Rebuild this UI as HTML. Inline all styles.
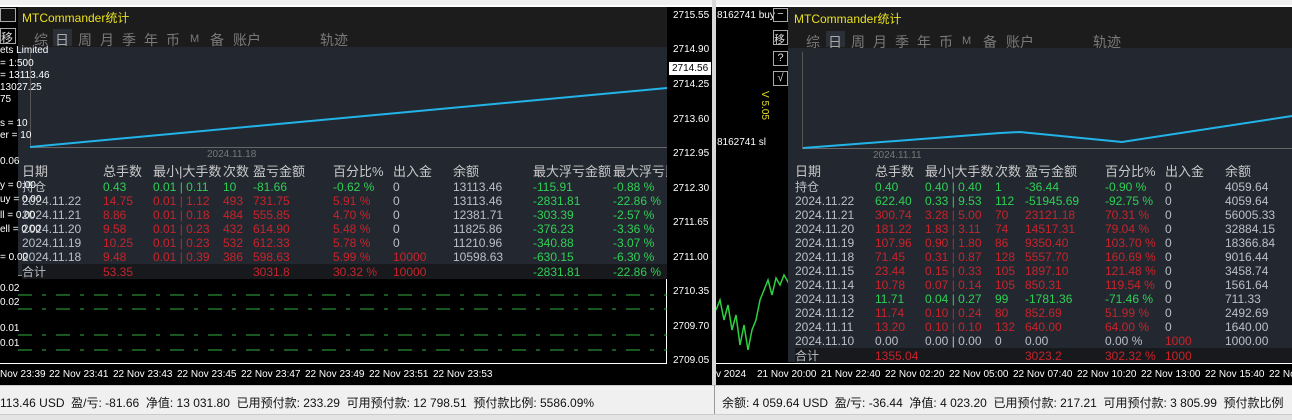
<!DOCTYPE html>
<html><head><meta charset="utf-8">
<style>
*{margin:0;padding:0;box-sizing:border-box}
body{width:1292px;height:420px;overflow:hidden;background:#000;position:relative;font-family:"Liberation Sans","Noto Sans CJK SC",sans-serif;color:#ddd}
.a{position:absolute;white-space:nowrap}
.px{font-size:10px;color:#fff}
.tab{font-size:14px;color:#7a7a7a;top:30px}
table{position:absolute;border-collapse:collapse;table-layout:fixed;font-size:12px}
td{height:14px;line-height:14px;padding:0;white-space:nowrap;overflow:hidden}
tr.h td{font-size:13px;color:#c8c8c8;height:16px}
.g td{color:#2fcf55}.r td{color:#c8232a}.w td{color:#b9c0c8}
td.d{color:#b9c0c8}td.z{color:#b9c0c8}
tr.t td{background:#17191c}
.tx{font-size:10px;color:#fff;top:369px}
.sb{font-size:12px;color:#111;top:394px}
</style></head><body>
<div class="a" style="left:0;top:0;width:1292px;height:6px;background:#f0f0f0"></div>
<div class="a" style="left:0;top:5px;width:1292px;height:2px;background:#fff"></div>
<div class="a" style="left:712px;top:0;width:4px;height:420px;background:#d8d8d8"></div>
<div class="a" style="left:0;top:7px;width:667px;height:357px;border-right:1px solid #fff;border-bottom:1px solid #fff"></div>
<div class="a px" style="left:673px;top:10px">2715.55</div>
<div class="a px" style="left:673px;top:44px">2714.90</div>
<div class="a" style="left:669px;top:62px;width:42px;height:13px;background:#fff;color:#000;font-size:10px;padding-left:3px;line-height:13px">2714.56</div>
<div class="a px" style="left:673px;top:79px">2714.25</div>
<div class="a px" style="left:673px;top:114px">2713.60</div>
<div class="a px" style="left:673px;top:148px">2712.95</div>
<div class="a px" style="left:673px;top:183px">2712.30</div>
<div class="a px" style="left:673px;top:217px">2711.65</div>
<div class="a px" style="left:673px;top:252px">2711.00</div>
<div class="a px" style="left:673px;top:286px">2710.35</div>
<div class="a px" style="left:673px;top:321px">2709.70</div>
<div class="a px" style="left:673px;top:355px">2709.05</div>
<svg class="a" style="left:0;top:290px" width="667" height="70"><g stroke="#2fb040" stroke-width="1" stroke-dasharray="14,10,4,10"><line x1="18" y1="5" x2="667" y2="5"/><line x1="18" y1="19" x2="667" y2="19"/><line x1="18" y1="45" x2="667" y2="45"/><line x1="18" y1="60" x2="667" y2="60"/></g></svg>
<div class="a px" style="left:0;top:283px">0.02</div>
<div class="a px" style="left:0;top:297px">0.02</div>
<div class="a px" style="left:0;top:323px">0.01</div>
<div class="a px" style="left:0;top:338px">0.01</div>
<div class="a" style="left:18px;top:7px;width:649px;height:20px;background:#1c1c1c"></div>
<div class="a" style="left:22px;top:9px;font-size:12px;color:#e8e020">MTCommander统计</div>
<div class="a" style="left:18px;top:27px;width:649px;height:20px;background:#1c1c1c"></div>
<div class="a" style="left:53px;top:29px;width:19px;height:17px;background:#2a2f38"></div>
<div class="a tab" style="left:34px">综</div><div class="a tab" style="left:55px;color:#aaa">日</div><div class="a tab" style="left:78px">周</div><div class="a tab" style="left:100px">月</div><div class="a tab" style="left:122px">季</div><div class="a tab" style="left:144px">年</div><div class="a tab" style="left:166px">币</div><div class="a tab" style="left:190px;font-size:11px;top:33px">M</div><div class="a tab" style="left:210px">备</div><div class="a tab" style="left:233px">账户</div><div class="a tab" style="left:320px">轨迹</div>
<div class="a" style="left:18px;top:47px;width:649px;height:229px;background:#232830;border-bottom:1px solid #888"></div>
<div class="a" style="left:30px;top:147px;width:637px;height:1px;background:#666"></div>
<div class="a" style="left:30px;top:52px;width:1px;height:95px;background:#555"></div>
<svg class="a" style="left:0;top:0" width="667" height="160"><polyline fill="none" stroke="#22b4e8" stroke-width="2" points="30,147 667,88"/></svg>
<div class="a" style="left:207px;top:149px;font-size:10px;color:#777">2024.11.18</div>
<table style="left:22px;top:164px;width:645px">
<col style="width:81px"><col style="width:50px"><col style="width:70px"><col style="width:30px"><col style="width:80px"><col style="width:60px"><col style="width:60px"><col style="width:80px"><col style="width:80px"><col style="width:54px">
<tr class="h"><td>日期</td><td>总手数</td><td>最小|大手数</td><td>次数</td><td>盈亏金额</td><td>百分比%</td><td>出入金</td><td>余额</td><td>最大浮亏金额</td><td>最大浮亏比</td></tr>
<tr class="g"><td class="d">持仓</td><td>0.43</td><td>0.01 | 0.11</td><td>10</td><td>-81.66</td><td>-0.62 %</td><td class="z">0</td><td class="z">13113.46</td><td>-115.91</td><td>-0.88 %</td></tr>
<tr class="r"><td class="d">2024.11.22</td><td>14.75</td><td>0.01 | 1.12</td><td>493</td><td>731.75</td><td>5.91 %</td><td class="z">0</td><td class="z">13113.46</td><td style="color:#2fcf55">-2831.81</td><td style="color:#2fcf55">-22.86 %</td></tr>
<tr class="r"><td class="d">2024.11.21</td><td>8.86</td><td>0.01 | 0.18</td><td>484</td><td>555.85</td><td>4.70 %</td><td class="z">0</td><td class="z">12381.71</td><td style="color:#2fcf55">-303.39</td><td style="color:#2fcf55">-2.57 %</td></tr>
<tr class="r"><td class="d">2024.11.20</td><td>9.58</td><td>0.01 | 0.23</td><td>432</td><td>614.90</td><td>5.48 %</td><td class="z">0</td><td class="z">11825.86</td><td style="color:#2fcf55">-376.23</td><td style="color:#2fcf55">-3.36 %</td></tr>
<tr class="r"><td class="d">2024.11.19</td><td>10.25</td><td>0.01 | 0.23</td><td>532</td><td>612.33</td><td>5.78 %</td><td class="z">0</td><td class="z">11210.96</td><td style="color:#2fcf55">-340.88</td><td style="color:#2fcf55">-3.07 %</td></tr>
<tr class="r"><td class="d">2024.11.18</td><td>9.48</td><td>0.01 | 0.39</td><td>386</td><td>598.63</td><td>5.99 %</td><td>10000</td><td class="z">10598.63</td><td style="color:#2fcf55">-630.15</td><td style="color:#2fcf55">-6.30 %</td></tr>
<tr class="r t"><td class="d" style="height:15px">合计</td><td>53.35</td><td></td><td></td><td>3031.8</td><td>30.32 %</td><td>10000</td><td></td><td style="color:#2fcf55">-2831.81</td><td style="color:#2fcf55">-22.86 %</td></tr>
</table>
<div class="a" style="left:0;top:8px;width:16px;height:14px;border:1px solid #aaa;background:#111"></div>
<div class="a" style="left:0;top:28px;width:16px;height:16px;border:1px solid #aaa;font-size:12px;color:#ddd">移</div>
<div class="a" style="left:0;top:45px;font-size:10px;color:#fff">ets Limited</div>
<div class="a" style="left:0;top:58px;font-size:10px;color:#fff">= 1:500</div>
<div class="a" style="left:0;top:70px;font-size:10px;color:#fff">= 13113.46</div>
<div class="a" style="left:0;top:82px;font-size:10px;color:#fff">13027.25</div>
<div class="a" style="left:0;top:94px;font-size:10px;color:#fff">75</div>
<div class="a" style="left:0;top:118px;font-size:10px;color:#fff">s = 10</div>
<div class="a" style="left:0;top:130px;font-size:10px;color:#fff">er = 10</div>
<div class="a" style="left:0;top:156px;font-size:10px;color:#fff">0.06</div>
<div class="a" style="left:0;top:180px;font-size:10px;color:#fff">y = 0.00</div>
<div class="a" style="left:0;top:194px;font-size:10px;color:#fff">uy = 0.00</div>
<div class="a" style="left:0;top:210px;font-size:10px;color:#fff">ll = 0.00</div>
<div class="a" style="left:0;top:224px;font-size:10px;color:#fff">ell = 0.00</div>
<div class="a" style="left:0;top:252px;font-size:10px;color:#fff">= 0.00</div>
<div class="a tx" style="left:0">Nov 23:39</div><div class="a tx" style="left:49px">22 Nov 23:41</div><div class="a tx" style="left:113px">22 Nov 23:43</div><div class="a tx" style="left:177px">22 Nov 23:45</div><div class="a tx" style="left:241px">22 Nov 23:47</div><div class="a tx" style="left:305px">22 Nov 23:49</div><div class="a tx" style="left:369px">22 Nov 23:51</div><div class="a tx" style="left:433px">22 Nov 23:53</div>

<div class="a" style="left:716px;top:7px;width:576px;height:357px;border-bottom:1px solid #fff"></div>
<div class="a" style="left:717px;top:10px;font-size:10px;color:#fff">8162741 buy</div>
<div class="a" style="left:717px;top:137px;font-size:10px;color:#fff">8162741 sl</div>
<div class="a" style="left:750px;top:100px;font-size:10px;color:#e8e020;transform:rotate(90deg)">V 5.05</div>
<div class="a" style="left:773px;top:8px;width:15px;height:14px;border:1px solid #aaa;color:#ddd;font-size:11px;text-align:center;line-height:11px">−</div>
<div class="a" style="left:773px;top:30px;width:15px;height:15px;border:1px solid #aaa;color:#ddd;font-size:11px">移</div>
<div class="a" style="left:773px;top:51px;width:15px;height:15px;border:1px solid #aaa;color:#ddd;font-size:11px;text-align:center">?</div>
<div class="a" style="left:773px;top:71px;width:15px;height:15px;border:1px solid #aaa;color:#ddd;font-size:11px;text-align:center">√</div>
<svg class="a" style="left:716px;top:270px" width="76" height="90"><polyline fill="none" stroke="#2fd040" stroke-width="1.5" points="0,40 4,30 8,50 12,35 16,60 20,45 24,75 28,55 32,80 36,60 40,50 44,30 48,20 52,10 56,25 60,8 64,15 68,5 72,12 76,6"/></svg>
<div class="a" style="left:788px;top:7px;width:504px;height:20px;background:#1c1c1c"></div>
<div class="a" style="left:794px;top:10px;font-size:12px;color:#e8e020">MTCommander统计</div>
<div class="a" style="left:788px;top:27px;width:504px;height:21px;background:#1c1c1c"></div>
<div class="a" style="left:826px;top:31px;width:19px;height:16px;background:#2a2f38"></div>
<div class="a tab" style="left:806px;top:32px">综</div><div class="a tab" style="left:828px;top:32px;color:#aaa">日</div><div class="a tab" style="left:851px;top:32px">周</div><div class="a tab" style="left:873px;top:32px">月</div><div class="a tab" style="left:895px;top:32px">季</div><div class="a tab" style="left:917px;top:32px">年</div><div class="a tab" style="left:939px;top:32px">币</div><div class="a tab" style="left:962px;top:35px;font-size:11px">M</div><div class="a tab" style="left:983px;top:32px">备</div><div class="a tab" style="left:1006px;top:32px">账户</div><div class="a tab" style="left:1093px;top:32px">轨迹</div>
<div class="a" style="left:788px;top:48px;width:504px;height:314px;background:#232830"></div>
<div class="a" style="left:802px;top:148px;width:490px;height:1px;background:#666"></div>
<div class="a" style="left:802px;top:52px;width:1px;height:96px;background:#555"></div>
<svg class="a" style="left:0;top:0" width="1292" height="160"><polyline fill="none" stroke="#22b4e8" stroke-width="2" points="803,148 1000,133 1020,132 1122,142 1292,116"/></svg>
<div class="a" style="left:873px;top:150px;font-size:10px;color:#777">2024.11.11</div>
<table style="left:795px;top:164px;width:497px">
<col style="width:80px"><col style="width:50px"><col style="width:70px"><col style="width:30px"><col style="width:80px"><col style="width:60px"><col style="width:60px"><col style="width:67px">
<tr class="h"><td>日期</td><td>总手数</td><td>最小|大手数</td><td>次数</td><td>盈亏金额</td><td>百分比%</td><td>出入金</td><td>余额</td></tr>
<tr class="g"><td class="d">持仓</td><td>0.40</td><td>0.40 | 0.40</td><td>1</td><td>-36.44</td><td>-0.90 %</td><td class="z">0</td><td class="z">4059.64</td></tr>
<tr class="g"><td class="d">2024.11.22</td><td>622.40</td><td>0.33 | 9.53</td><td>112</td><td>-51945.69</td><td>-92.75 %</td><td class="z">0</td><td class="z">4059.64</td></tr>
<tr class="r"><td class="d">2024.11.21</td><td>300.74</td><td>3.28 | 5.00</td><td>70</td><td>23121.18</td><td>70.31 %</td><td class="z">0</td><td class="z">56005.33</td></tr>
<tr class="r"><td class="d">2024.11.20</td><td>181.22</td><td>1.83 | 3.11</td><td>74</td><td>14517.31</td><td>79.04 %</td><td class="z">0</td><td class="z">32884.15</td></tr>
<tr class="r"><td class="d">2024.11.19</td><td>107.96</td><td>0.90 | 1.80</td><td>86</td><td>9350.40</td><td>103.70 %</td><td class="z">0</td><td class="z">18366.84</td></tr>
<tr class="r"><td class="d">2024.11.18</td><td>71.45</td><td>0.31 | 0.87</td><td>128</td><td>5557.70</td><td>160.69 %</td><td class="z">0</td><td class="z">9016.44</td></tr>
<tr class="r"><td class="d">2024.11.15</td><td>23.44</td><td>0.15 | 0.33</td><td>105</td><td>1897.10</td><td>121.48 %</td><td class="z">0</td><td class="z">3458.74</td></tr>
<tr class="r"><td class="d">2024.11.14</td><td>10.78</td><td>0.07 | 0.14</td><td>105</td><td>850.31</td><td>119.54 %</td><td class="z">0</td><td class="z">1561.64</td></tr>
<tr class="g"><td class="d">2024.11.13</td><td>11.71</td><td>0.04 | 0.27</td><td>99</td><td>-1781.36</td><td>-71.46 %</td><td class="z">0</td><td class="z">711.33</td></tr>
<tr class="r"><td class="d">2024.11.12</td><td>11.74</td><td>0.10 | 0.24</td><td>80</td><td>852.69</td><td>51.99 %</td><td class="z">0</td><td class="z">2492.69</td></tr>
<tr class="r"><td class="d">2024.11.11</td><td>13.20</td><td>0.10 | 0.10</td><td>132</td><td>640.00</td><td>64.00 %</td><td class="z">0</td><td class="z">1640.00</td></tr>
<tr class="w"><td>2024.11.10</td><td>0.00</td><td>0.00 | 0.00</td><td>0</td><td>0.00</td><td>0.00 %</td><td style="color:#c8232a">1000</td><td>1000.00</td></tr>
<tr class="r t"><td class="d" style="height:15px">合计</td><td>1355.04</td><td></td><td></td><td>3023.2</td><td>302.32 %</td><td>1000</td><td></td></tr>
</table>
<div class="a tx" style="left:716px">v 2024</div><div class="a tx" style="left:757px">21 Nov 20:00</div><div class="a tx" style="left:821px">21 Nov 22:40</div><div class="a tx" style="left:885px">22 Nov 02:20</div><div class="a tx" style="left:949px">22 Nov 05:00</div><div class="a tx" style="left:1013px">22 Nov 07:40</div><div class="a tx" style="left:1077px">22 Nov 10:20</div><div class="a tx" style="left:1141px">22 Nov 13:00</div><div class="a tx" style="left:1205px">22 Nov 15:40</div><div class="a tx" style="left:1269px">22 No</div>
<div class="a" style="left:0;top:385px;width:1292px;height:35px;background:#f0f0f0;border-top:1px solid #ccc"></div>
<div class="a" style="left:714px;top:385px;width:1px;height:35px;background:#999"></div>
<div class="a" style="left:0;top:414px;width:1292px;height:6px;background:#e4e4e4;border-top:1px solid #ccc"></div>
<div class="a sb" style="left:0">113.46 USD&nbsp;&nbsp;盈/亏: -81.66&nbsp;&nbsp;净值: 13 031.80&nbsp;&nbsp;已用预付款: 233.29&nbsp;&nbsp;可用预付款: 12 798.51&nbsp;&nbsp;预付款比例: 5586.09%</div>
<div class="a sb" style="left:722px">余额: 4 059.64 USD&nbsp;&nbsp;盈/亏: -36.44&nbsp;&nbsp;净值: 4 023.20&nbsp;&nbsp;已用预付款: 217.21&nbsp;&nbsp;可用预付款: 3 805.99&nbsp;&nbsp;预付款比例</div>
</body></html>
